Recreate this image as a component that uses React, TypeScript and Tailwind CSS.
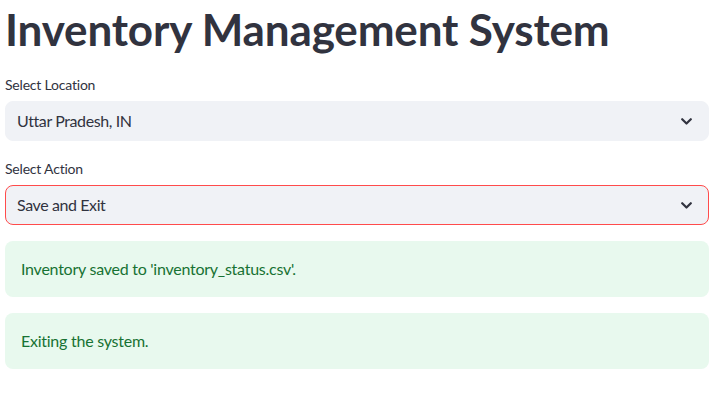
import React from "react";

function Chevron() {
  return (
    <svg width="11" height="7" viewBox="0 0 11 7" fill="none" className="shrink-0">
      <path d="M1.2 1.2 L5.5 5.5 L9.8 1.2" stroke="#31333f" strokeWidth="2.2" strokeLinecap="round" strokeLinejoin="round" />
    </svg>
  );
}

function Select({ label, value, error }: { label: string; value: string; error?: boolean }) {
  return (
    <div className="flex flex-col">
      <div className="h-[20px] text-[14px] leading-[20px] text-[#31333f] mb-[6px] tracking-[-0.2px]">{label}</div>
      <div
        className={
          "h-[40px] rounded-[8px] bg-[#f0f2f6] flex items-center justify-between pl-[11px] pr-[16px] border " +
          (error ? "border-[#ff4b4b]" : "border-[#f0f2f6]")
        }
      >
        <span className="text-[16px] text-[#31333f] tracking-[-0.4px]">{value}</span>
        <Chevron />
      </div>
    </div>
  );
}

function Alert({ text }: { text: string }) {
  return (
    <div className="h-[56px] rounded-[8px] bg-[#e8f9ee] flex items-center px-[16px] text-[16px] text-[#177233] tracking-[-0.25px]">
      {text}
    </div>
  );
}

export default function App() {
  return (
    <div
      className="w-[713px] h-[407px] bg-white pl-[5px] pr-[4px] overflow-hidden"
      style={{ fontFamily: "'Lato', 'Noto Sans', sans-serif" }}
    >
      <h1 className="text-[44px] font-bold leading-[58px] text-[#31333f] tracking-[-0.15px]">
        Inventory Management System
      </h1>
      <div className="mt-[17px]">
        <Select label="Select Location" value="Uttar Pradesh, IN" />
      </div>
      <div className="mt-[18px]">
        <Select label="Select Action" value="Save and Exit" error />
      </div>
      <div className="mt-[16px] flex flex-col gap-[16px]">
        <Alert text="Inventory saved to 'inventory_status.csv'." />
        <Alert text="Exiting the system." />
      </div>
    </div>
  );
}
